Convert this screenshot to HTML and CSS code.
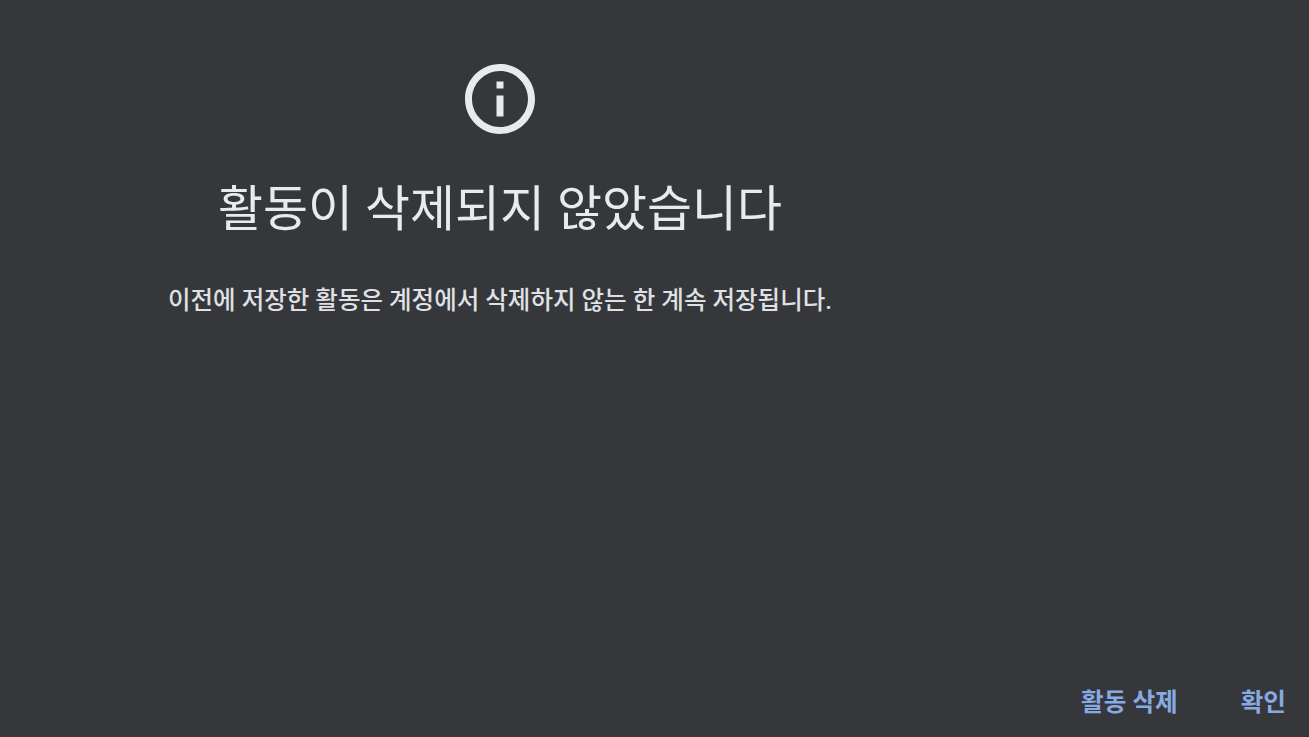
FILE: index.html
```html
<!DOCTYPE html>
<html lang="ko">
<head>
    <meta charset="UTF-8">
    <title>활동이 삭제되지 않았습니다</title>
    <link rel="stylesheet" href="styles.css">
</head>
<body>
    <div class="dialog">
        <div class="content">
            <svg class="info-icon" viewBox="0 0 24 24" width="84" height="84">
                <path fill="currentColor" d="M11 7h2v2h-2zm0 4h2v6h-2zm1-9C6.48 2 2 6.48 2 12s4.48 10 10 10 10-4.48 10-10S17.52 2 12 2zm0 18c-4.41 0-8-3.59-8-8s3.59-8 8-8 8 3.59 8 8-3.59 8-8 8z"/>
            </svg>
            <h1>활동이 삭제되지 않았습니다</h1>
            <p>이전에 저장한 활동은 계정에서 삭제하지 않는 한 계속 저장됩니다.</p>
        </div>
        <div class="actions">
            <button class="btn">활동 삭제</button>
            <button class="btn">확인</button>
        </div>
    </div>
</body>
</html>
```
FILE: styles.css
```css
* {
    box-sizing: border-box;
    margin: 0;
    padding: 0;
}

body {
    background-color: #36373b;
    color: #e8eaed;
    font-family: Roboto, "Noto Sans CJK KR", sans-serif;
    height: 100vh;
    overflow: hidden;
}

.dialog {
    height: 100%;
    display: flex;
    flex-direction: column;
    justify-content: space-between;
}

.content {
    width: 1000px;
    display: flex;
    flex-direction: column;
    align-items: center;
    padding-top: 57px;
}

.info-icon {
    display: block;
    color: #e8eaed;
}

h1 {
    font-size: 48.9px;
    font-weight: 400;
    line-height: 64px;
    margin-top: 37px;
}

p {
    font-size: 24.5px;
    font-weight: 500;
    line-height: 32px;
    margin-top: 43px;
    color: #dfe1e5;
}

.actions {
    display: flex;
    justify-content: flex-end;
    gap: 63px;
    padding: 0 23px 18px 0;
}

.btn {
    background: none;
    border: none;
    color: #86aae2;
    font-family: inherit;
    font-size: 24.6px;
    font-weight: 700;
    line-height: 32px;
}
```
